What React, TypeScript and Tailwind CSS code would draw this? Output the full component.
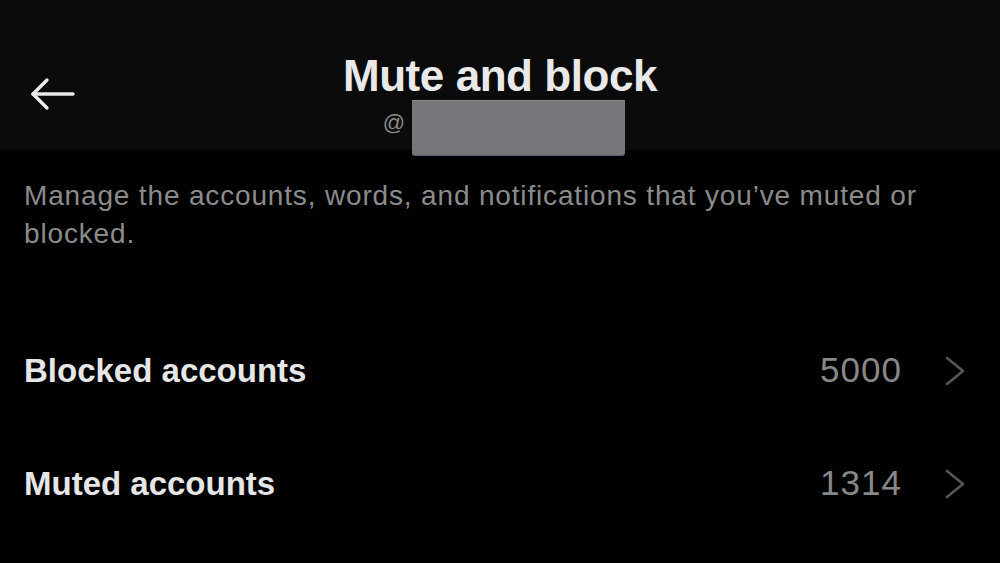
const rows = [
  { label: 'Blocked accounts', count: '5000' },
  { label: 'Muted accounts', count: '1314' },
]

export default function App() {
  return (
    <div className="w-[1000px] h-[563px] bg-black overflow-hidden relative" style={{ fontFamily: '"Liberation Sans", Arial, sans-serif' }}>
      {/* Header */}
      <header className="h-[150px] bg-[#0b0b0b] relative flex flex-col items-center">
        <button className="absolute left-[28px] top-[76px] text-[#ececec]">
          <svg viewBox="0 0 48 36" className="w-[48px] h-[36px]" fill="none" stroke="currentColor" strokeWidth="3.4" strokeLinecap="round" strokeLinejoin="round">
            <path d="M45 18H5" />
            <path d="M19 4L5 18l14 14" />
          </svg>
        </button>
        <h1 className="mt-[48px] text-[44px] leading-[56px] font-bold text-[#e9e9e9] tracking-[-0.01em]">Mute and block</h1>
        <div className="flex items-center -ml-[212px] mt-[2px]">
          <span className="text-[22px] text-[#8a8a8a]">@</span>
        </div>
        {/* redaction box */}
        <div className="absolute left-[412px] top-[100px] w-[213px] h-[55px] bg-[#77777b] rounded-b-[3px] border-t border-[#8a8a8e] shadow-[0_1px_0_#5a5a80]" />
      </header>

      {/* Description */}
      <p className="w-[960px] px-6 pt-[27px] text-[28px] leading-[38px] tracking-[0.03em] text-[#8b8b8b]">
        Manage the accounts, words, and notifications that you’ve muted or blocked.
      </p>

      {/* Rows */}
      <div className="mt-[61px] flex flex-col">
        {rows.map(({ label, count }) => (
          <div key={label} className="h-[113px] flex items-center justify-between pl-6 pr-[34px]">
            <span className="text-[33px] font-bold text-[#e6e6e6]">{label}</span>
            <div className="flex items-center gap-[42px]">
              <span className="text-[35px] text-[#888888] tracking-[0.03em]">{count}</span>
              <svg viewBox="0 0 22 30" className="w-[22px] h-[30px] text-[#565656]" fill="none" stroke="currentColor" strokeWidth="2.6" strokeLinecap="round" strokeLinejoin="round">
                <path d="M3 2l16 13L3 28" />
              </svg>
            </div>
          </div>
        ))}
      </div>
    </div>
  )
}
